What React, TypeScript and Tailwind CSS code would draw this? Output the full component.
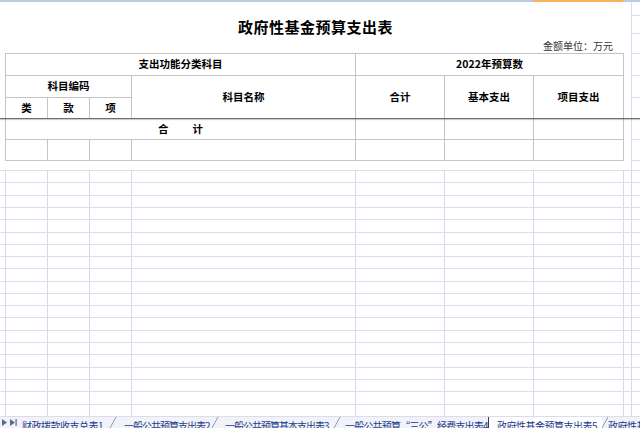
const lowerRows = [12, 13, 12, 12, 13, 12, 12, 12, 13, 12, 12, 12, 13, 12, 12, 13, 12, 12, 13, 12];
const lowerCols = [
  "w-[6px]",
  "w-[42px]",
  "w-[42px]",
  "w-[42px]",
  "w-[224px]",
  "w-[89px]",
  "w-[89px]",
  "w-[90px]",
  "w-[8px]",
  "w-[8px]",
];
const stripRows = [
  "h-[14px]",
  "h-[18px]",
  "h-[20px]",
  "h-[22px]",
  "h-[22px]",
  "h-[21px]",
  "h-[21px]",
  "h-[21px]",
];

const cell = "border-r border-b border-[#c4c4c4] flex items-center justify-center";

const Slash = () => (
  <svg width="10" height="11" viewBox="0 0 10 11" className="shrink-0">
    <line x1="2" y1="11" x2="8" y2="0" stroke="#8e9bb5" strokeWidth="1" />
  </svg>
);

const App = () => {
  return (
    <div className="relative w-[640px] h-[428px] overflow-hidden bg-white font-['Noto_Sans_CJK_SC','Noto_Sans',sans-serif] text-black">
      {/* column header strip */}
      <div className="flex h-[2px] bg-[#bccbe4]">
        <div className="w-[533px]" />
        <div className="w-[90px] bg-[#f6b35b]" />
      </div>

      <div className="flex h-[168px]">
        <div className="w-[631px] flex flex-col">
          <div className="h-[37px] pt-[15px]">
            <h1 className="text-center text-[15px] leading-[20px] font-bold tracking-[0.5px]">
              政府性基金预算支出表
            </h1>
          </div>
          <div className="h-[14px] pr-[18px] text-right text-[10px] leading-[14px] text-[#333]">
            金额单位：万元
          </div>
          <div className="ml-[5px] w-[619px] grid grid-cols-[42px_42px_42px_224px_89px_89px_90px] grid-rows-[22px_22px_21px_21px_21px] border-l border-t border-[#c4c4c4] text-[10.5px] leading-none font-bold">
            <div className={`${cell} col-span-4`}>支出功能分类科目</div>
            <div className={`${cell} col-span-3`}>2022年预算数</div>
            <div className={`${cell} col-span-3`}>科目编码</div>
            <div className={`${cell} row-span-2`}>科目名称</div>
            <div className={`${cell} row-span-2`}>合计</div>
            <div className={`${cell} row-span-2`}>基本支出</div>
            <div className={`${cell} row-span-2`}>项目支出</div>
            <div className={cell}>类</div>
            <div className={cell}>款</div>
            <div className={cell}>项</div>
            <div className={`${cell} col-span-4 gap-[24px]`}>
              <span>合</span>
              <span>计</span>
            </div>
            <div className={cell} />
            <div className={cell} />
            <div className={cell} />
            {Array.from({ length: 7 }).map((_, i) => (
              <div key={i} className={cell} />
            ))}
          </div>
        </div>
        <div className="w-[9px] border-l border-[#d9dcec] flex flex-col">
          {stripRows.map((h, i) => (
            <div key={i} className={`${h} border-b border-[#dadded]`} />
          ))}
        </div>
      </div>

      {/* empty sheet grid */}
      <div className="border-t border-[#dadded]">
        {lowerRows.map((h, r) => (
          <div key={r} className={`flex ${h === 13 ? "h-[13px]" : "h-[12px]"}`}>
            {lowerCols.map((w, c) => (
              <div
                key={c}
                className={`${w} shrink-0 border-b border-[#dadded] ${
                  c < lowerCols.length - 1 ? "border-r border-r-[#d6d9eb]" : ""
                }`}
              />
            ))}
          </div>
        ))}
      </div>

      {/* sheet tabs */}
      <div className="flex h-[11px] overflow-hidden bg-[#f1f3f8] text-[10px] leading-[13px] tracking-[-0.5px] text-[#1f3a8a] whitespace-nowrap">
        <div className="w-[18px] shrink-0 flex items-start gap-[3px] pl-[2px] pt-[2px]">
          <svg width="5" height="7" viewBox="0 0 5 7">
            <path d="M0 0 L5 3.5 L0 7 Z" fill="#5b6b8f" />
          </svg>
          <svg width="7" height="7" viewBox="0 0 7 7">
            <path d="M0 0 L5 3.5 L0 7 Z" fill="#5b6b8f" />
            <rect x="5.5" y="0" width="1.2" height="7" fill="#5b6b8f" />
          </svg>
        </div>
        <div className="w-[90px] shrink-0 overflow-hidden pl-[4px] pt-[2px]">财政拨款收支总表1</div>
        <Slash />
        <div className="w-[92px] shrink-0 overflow-hidden pl-[6px] pt-[2px] tracking-[-1px]">一般公共预算支出表2</div>
        <Slash />
        <div className="w-[112px] shrink-0 overflow-hidden pl-[5px] pt-[2px] tracking-[-1px]">一般公共预算基本支出表3</div>
        <Slash />
        <div className="w-[146px] shrink-0 overflow-hidden pl-[3px] pt-[2px] tracking-[-0.8px]">
          一般公共预算“三公”经费支出表4
        </div>
        <div className="w-[114px] shrink-0 overflow-hidden border-l border-[#3a3a3a] bg-white pl-[8px] pt-[2px]">
          政府性基金预算支出表5
        </div>
        <svg width="6" height="11" viewBox="0 0 6 11" className="shrink-0">
          <line x1="0" y1="11" x2="6" y2="0" stroke="#8e9bb5" strokeWidth="1" />
        </svg>
        <div className="flex-1 overflow-hidden pt-[2px]">政府性基金预算支出表6</div>
      </div>

      {/* frozen pane divider */}
      <div className="absolute left-0 top-[118px] h-[1px] w-full bg-[#6f6f6f] shadow-[0_1px_1px_rgba(0,0,0,0.25)]" />
    </div>
  );
};

export default App;
